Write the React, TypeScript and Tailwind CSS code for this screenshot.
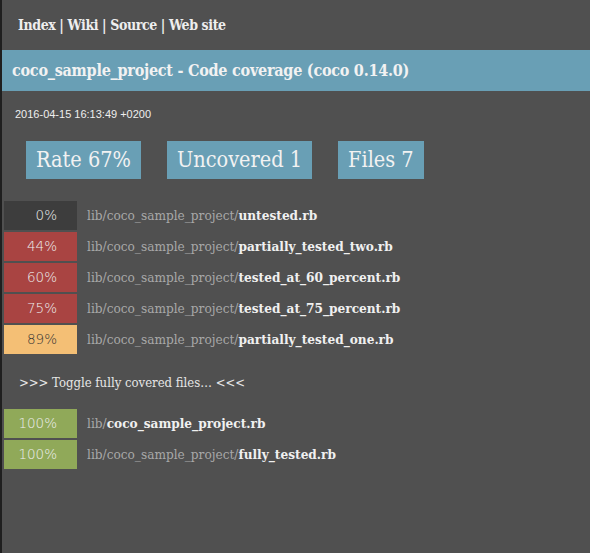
import React from 'react';

type Row = { pct: string; dir: string; file: string; tone: string };

const files: Row[] = [
  { pct: '0%', dir: 'lib/coco_sample_project/', file: 'untested.rb', tone: 'bg-[#3d3d3d] text-[#eee]' },
  { pct: '44%', dir: 'lib/coco_sample_project/', file: 'partially_tested_two.rb', tone: 'bg-[#a94442] text-[#eee]' },
  { pct: '60%', dir: 'lib/coco_sample_project/', file: 'tested_at_60_percent.rb', tone: 'bg-[#a94442] text-[#eee]' },
  { pct: '75%', dir: 'lib/coco_sample_project/', file: 'tested_at_75_percent.rb', tone: 'bg-[#a94442] text-[#eee]' },
  { pct: '89%', dir: 'lib/coco_sample_project/', file: 'partially_tested_one.rb', tone: 'bg-[#f4bf75] text-[#333]' },
];

const covered: Row[] = [
  { pct: '100%', dir: 'lib/', file: 'coco_sample_project.rb', tone: 'bg-[#90a959] text-[#eee]' },
  { pct: '100%', dir: 'lib/coco_sample_project/', file: 'fully_tested.rb', tone: 'bg-[#90a959] text-[#eee]' },
];

function FileRow({ row }: { row: Row }) {
  return (
    <div className="flex items-center h-[29px] mb-[2px]">
      <div
        className={`w-[73px] h-full flex items-center justify-end pr-[20px] text-[13.5px] font-extralight font-['DejaVu_Sans',sans-serif] ${row.tone}`}
      >
        {row.pct}
      </div>
      <div className="ml-[10px] text-[13.5px] text-[#a8a8a8]">
        {row.dir}
        <b className="text-[#f0f0f0]">{row.file}</b>
      </div>
    </div>
  );
}

export default function App() {
  return (
    <div className="w-[590px] h-[553px] bg-[#505050] border-l-2 border-[#1f1f1f] overflow-hidden font-['DejaVu_Serif_Condensed','DejaVu_Serif',serif]">
      <nav className="h-[50px] pl-[16px] pt-[15px] text-[14px] tracking-[-0.4px] font-bold text-[#eee]">
        Index | Wiki | Source | Web site
      </nav>
      <h1 className="h-[41px] bg-[#699fb5] pl-[10px] flex items-center text-[16px] tracking-[-0.25px] font-bold text-[#f2f2f2]">
        coco_sample_project - Code coverage (coco 0.14.0)
      </h1>
      <div className="pl-[13px] pt-[15px] h-[50px] text-[11px] text-[#eee] font-['Liberation_Sans',sans-serif]">
        2016-04-15 16:13:49 +0200
      </div>
      <div className="flex gap-[26px] pl-[24px]">
        <div className="bg-[#699fb5] h-[38px] px-[10px] flex items-center text-[21.5px] text-[#f2f2f2]">Rate 67%</div>
        <div className="bg-[#699fb5] h-[38px] px-[10px] flex items-center text-[21.5px] text-[#f2f2f2]">Uncovered 1</div>
        <div className="bg-[#699fb5] h-[38px] px-[10px] flex items-center text-[21.5px] text-[#f2f2f2]">Files 7</div>
      </div>
      <div className="pl-[2px] mt-[22px]">
        {files.map((r) => (
          <FileRow key={r.file} row={r} />
        ))}
      </div>
      <div className="pl-[17px] h-[53px] flex items-center text-[13px] text-[#e6e6e6]">
        &gt;&gt;&gt; Toggle fully covered files… &lt;&lt;&lt;
      </div>
      <div className="pl-[2px]">
        {covered.map((r) => (
          <FileRow key={r.file} row={r} />
        ))}
      </div>
    </div>
  );
}
